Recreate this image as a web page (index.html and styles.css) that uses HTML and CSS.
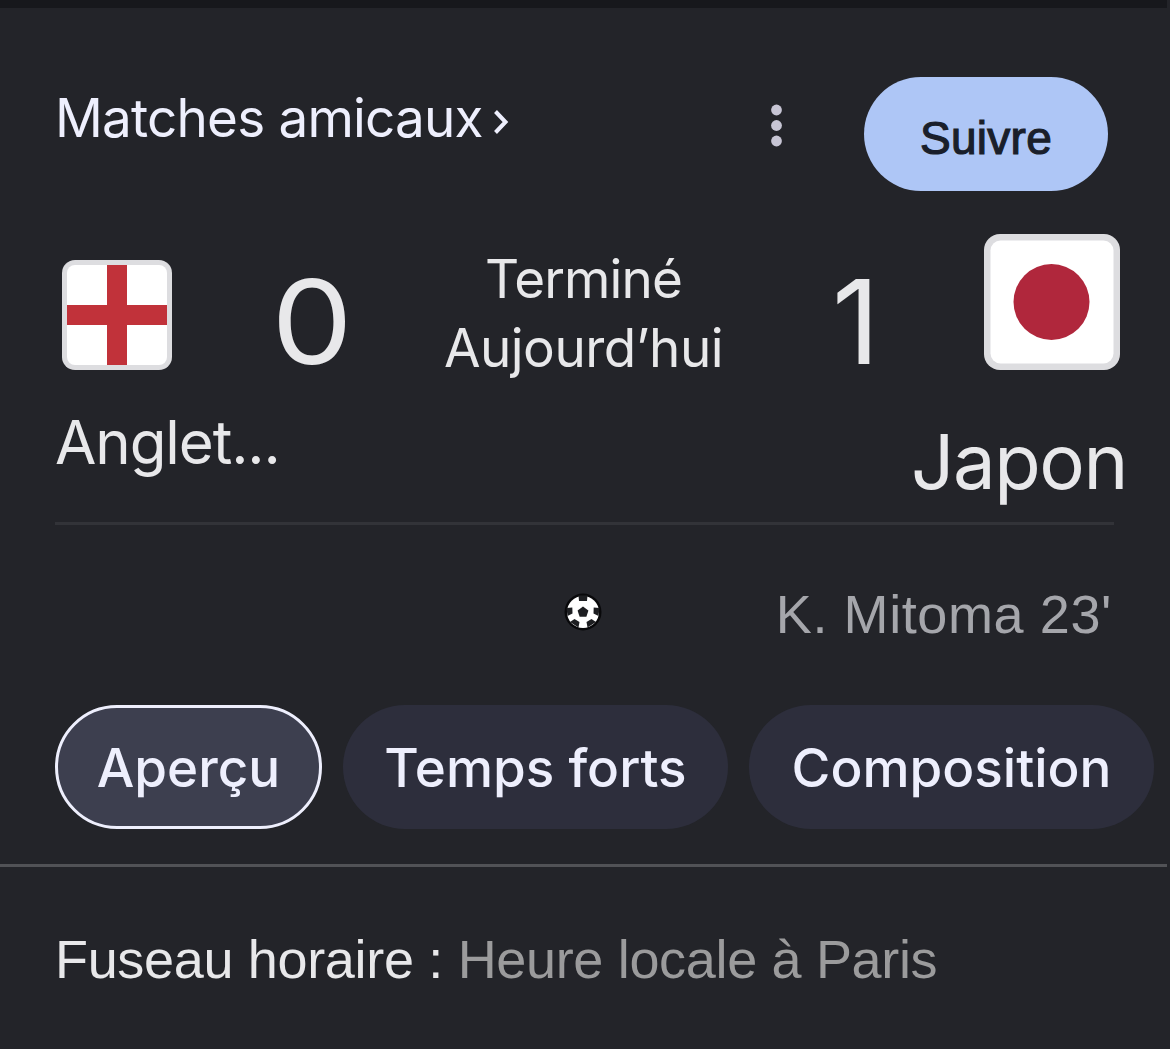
FILE: index.html
```html
<!DOCTYPE html>
<html lang="fr">
<head>
    <meta charset="UTF-8">
    <meta name="viewport" content="width=device-width, initial-scale=1.0">
    <title>Angleterre - Japon</title>
    <link rel="stylesheet" href="styles.css">
</head>
<body>
    <div class="top-edge"></div>

    <header class="header">
        <a class="league"><span class="league-name">Matches amicaux</span><svg class="chevron" width="16" height="28" viewBox="0 0 16 28"><path d="M2.500 3.500 L12.500 14 L2.500 24.500" fill="none" stroke="#eeeffd" stroke-width="4"/></svg></a>
        <svg class="menu" width="12" height="44" viewBox="0 0 12 44" fill="#c7c5d4">
            <circle cx="5.500" cy="7" r="5.400"/>
            <circle cx="5.500" cy="22.500" r="5.400"/>
            <circle cx="5.500" cy="38" r="5.400"/>
        </svg>
        <button class="follow">Suivre</button>
    </header>

    <main class="match">
        <div class="team home">
            <svg class="flag" width="110" height="110" viewBox="0 0 110 110">
                <rect width="110" height="110" rx="13" fill="#dddde0"/>
                <rect x="5" y="5" width="100" height="100" rx="8" fill="#fff"/>
                <path d="M45 5h20v40h40v20H65v40H45V65H5V45h40z" fill="#c1323a"/>
            </svg>
            <div class="team-name">Anglet...</div>
        </div>
        <div class="score score-home">0</div>
        <div class="status">
            <div class="state">Terminé</div>
            <div class="day">Aujourd’hui</div>
        </div>
        <div class="score score-away">1</div>
        <div class="team away">
            <svg class="flag" width="136" height="136" viewBox="0 0 136 136">
                <rect width="136" height="136" rx="16" fill="#dddde0"/>
                <rect x="6.500" y="6.500" width="123" height="123" rx="10" fill="#fff"/>
                <circle cx="67.500" cy="68" r="38" fill="#b0273c"/>
            </svg>
            <div class="team-name">Japon</div>
        </div>
    </main>

    <section class="goals">
        <svg class="ball" width="38" height="38" viewBox="0 0 38 38">
            <circle cx="19" cy="19" r="18.500" fill="#08080a"/>
            <circle cx="19" cy="19" r="16" fill="#fff"/>
            <g fill="#1d1e21">
                <path d="M19 13.500l5.400 4-2 6.200h-6.800l-2-6.200z"/>
                <path d="M14.500 2.500h9l-.5 5.500h-8z"/>
                <path d="M2.500 15l5.800-.5.200 6-5 2.500z"/>
                <path d="M35.500 15l-5.800-.5-.2 6 5 2.500z"/>
                <path d="M6 29l4.500-3 5 3-1 5.500z"/>
                <path d="M32 29l-4.500-3-5 3 1 5.500z"/>
            </g>
        </svg>
        <div class="scorer">K. Mitoma 23'</div>
    </section>

    <nav class="chips">
        <button class="chip active">Aperçu</button>
        <button class="chip highlights">Temps forts</button>
        <button class="chip lineup">Composition</button>
    </nav>

    <footer class="timezone">
        <span class="tz-label">Fuseau horaire :</span> <span class="tz-value">Heure locale à Paris</span>
    </footer>
</body>
</html>
```
FILE: styles.css
```css
* {
    box-sizing: border-box;
}

body {
    margin: 0;
    width: 1170px;
    height: 1049px;
    overflow: hidden;
    background-color: #232429;
    color: #e8e8ea;
    font-family: Inter, sans-serif;
}

svg {
    display: block;
    flex: none;
}

button {
    border: none;
    padding: 0;
    font-family: inherit;
    cursor: pointer;
}

.top-edge {
    width: 1167px;
    height: 8px;
    background-color: #17181c;
}

/* Header */
.header {
    display: flex;
    align-items: flex-start;
    height: 226px;
    padding: 69px 62px 0 55px;
}

.league {
    display: flex;
    width: 716px;
    color: #eeeffd;
    font-size: 53px;
    line-height: 82px;
    letter-spacing: -0.8px;
    white-space: nowrap;
}

.league-name {
    width: 438px;
}

.chevron {
    margin-top: 31px;
}

.menu {
    margin-top: 26px;
}

.follow {
    width: 244px;
    height: 114px;
    margin-left: auto;
    padding-top: 8px;
    border-radius: 57px;
    background-color: #aec6f6;
    color: #1a1f2b;
    font-family: "Liberation Sans", sans-serif;
    font-size: 46px;
    letter-spacing: 0.3px;
    -webkit-text-stroke: 1.2px #1a1f2b;
}

/* Teams and score */
.match {
    display: flex;
    height: 291px;
    margin: 0 56px 0 55px;
    border-bottom: 3px solid #323338;
    white-space: nowrap;
}

.team {
    flex: none;
}

.home {
    width: 220px;
    padding-top: 26px;
}

.home .flag {
    margin-left: 7px;
}

.home .team-name {
    margin-top: 32px;
    font-size: 60px;
    line-height: 81px;
    letter-spacing: -1.1px;
}

.away {
    display: flex;
    flex-direction: column;
    align-items: flex-end;
    width: 220px;
    margin-right: -14px;
}

.away .flag {
    margin-right: 8px;
}

.away .team-name {
    margin-top: 44px;
    margin-right: 1px;
    font-size: 76px;
    line-height: 94px;
    letter-spacing: -1.4px;
}

.score {
    width: 72px;
    padding-top: 28px;
    font-size: 117px;
    line-height: 120px;
}

/* the zero is a bit wider than the font's own */
.score-home {
    transform: scaleX(1.1);
}

.score-away {
    width: 76px;
}

.status {
    flex: 1;
    padding: 11px 12px 0 0;
    font-size: 53px;
    line-height: 69px;
    letter-spacing: -0.5px;
    text-align: center;
}

.state {
    letter-spacing: -0.9px;
}

/* Goals */
.goals {
    display: flex;
    justify-content: space-between;
    height: 180px;
    padding: 57px 58px 0 564px;
}

.ball {
    margin-top: 11px;
}

.scorer {
    color: #a5a6ab;
    font-family: "Liberation Sans", sans-serif;
    font-size: 54px;
    line-height: 64px;
    letter-spacing: 0.6px;
}

/* Tabs */
.chips {
    display: flex;
    gap: 21px;
    width: 1167px;
    height: 162px;
    padding-left: 55px;
    border-bottom: 3px solid #515256;
}

.chip {
    width: 385px;
    height: 124px;
    padding-top: 1px;
    border-radius: 62px;
    background-color: #2d2e3c;
    color: #eeeffd;
    font-size: 53px;
    font-weight: 500;
    white-space: nowrap;
}

.chip.active {
    width: 267px;
    border: 3px solid #eeeffd;
    background-color: #3d3f4f;
}

.chip.lineup {
    width: 405px;
}

/* Timezone */
.timezone {
    padding: 61px 55px 0;
    font-family: "Liberation Sans", sans-serif;
    font-size: 54px;
    line-height: 62px;
    letter-spacing: -0.33px;
}

.tz-value {
    color: #9b9b9c;
}
```
